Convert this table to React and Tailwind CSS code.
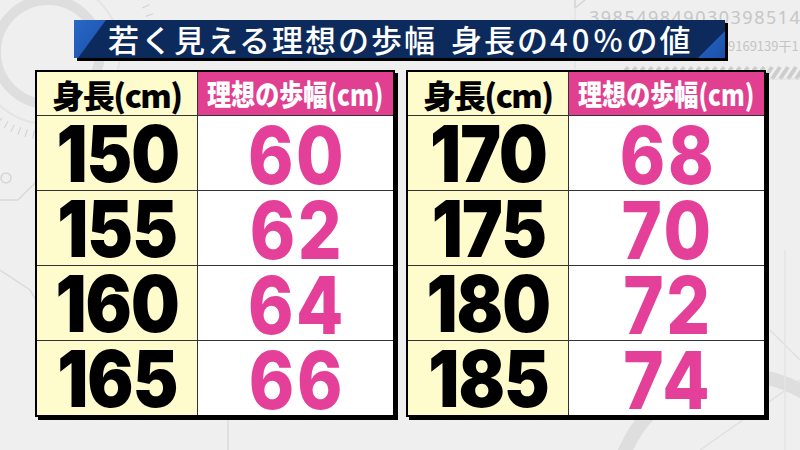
import React from "react";

const left = [
  ["150", "60"],
  ["155", "62"],
  ["160", "64"],
  ["165", "66"],
];
const right = [
  ["170", "68"],
  ["175", "70"],
  ["180", "72"],
  ["185", "74"],
];

const jp = { fontFamily: '"Noto Sans CJK JP", "Noto Sans", sans-serif' };
const num = { fontFamily: 'Inter, "Liberation Sans", sans-serif' };

function Background() {
  return (
    <svg
      className="absolute inset-0 pointer-events-none"
      width="800"
      height="450"
      viewBox="0 0 800 450"
    >
      <circle cx="48" cy="52" r="52" fill="none" stroke="#dedede" strokeWidth="10" />
      <circle cx="48" cy="52" r="72" fill="none" stroke="#e4e4e4" strokeWidth="2" />
      {Array.from({ length: 14 }).map((_, i) => {
        const a = (-70 + i * 5) * (Math.PI / 180);
        const r1 = 104, r2 = 112;
        return (
          <line
            key={"t" + i}
            x1={48 + r1 * Math.cos(a)}
            y1={52 + r1 * Math.sin(a)}
            x2={48 + r2 * Math.cos(a)}
            y2={52 + r2 * Math.sin(a)}
            stroke="#cfcfcf"
            strokeWidth="1"
          />
        );
      })}
      {Array.from({ length: 10 }).map((_, i) => {
        const a = (95 + i * 5) * (Math.PI / 180);
        const r1 = 80, r2 = 88;
        return (
          <line
            key={"b" + i}
            x1={48 + r1 * Math.cos(a)}
            y1={52 + r1 * Math.sin(a)}
            x2={48 + r2 * Math.cos(a)}
            y2={52 + r2 * Math.sin(a)}
            stroke="#cfcfcf"
            strokeWidth="1"
          />
        );
      })}
      <path d="M0 200 L18 200 L40 178" fill="none" stroke="#dadada" strokeWidth="1.5" />
      <circle cx="6" cy="178" r="5" fill="none" stroke="#d6d6d6" strokeWidth="1.5" />
      <path d="M0 270 L30 290 L36 300" fill="none" stroke="#dadada" strokeWidth="1.5" />
      <path d="M228 380 L228 450" fill="none" stroke="#dcdcdc" strokeWidth="1.5" />
      <path d="M575 0 L575 8 L585 0" fill="none" stroke="#d4d4d4" strokeWidth="1.5" />
      <path d="M575 8 L575 300" fill="none" stroke="#e4e4e4" strokeWidth="1.5" />
      <g stroke="#cdcdcd" strokeWidth="4">
        {Array.from({ length: 24 }).map((_, i) => (
          <line key={"h" + i} x1={620 + i * 8} y1="79" x2={628 + i * 8} y2="67" />
        ))}
      </g>
      <line x1="615" y1="79" x2="800" y2="79" stroke="#e0e0e0" strokeWidth="1" />
      <circle cx="740" cy="500" r="125" fill="none" stroke="#dedede" strokeWidth="14" />
      <path d="M700 450 L800 380" stroke="#e0e0e0" strokeWidth="1.5" />
      <path d="M770 330 L800 360" stroke="#e0e0e0" strokeWidth="1.5" />
      <path d="M785 250 L785 450" stroke="#e4e4e4" strokeWidth="1.5" />
    </svg>
  );
}

function Table({ rows }) {
  return (
    <div className="border-2 border-black shadow-[3px_3px_0_#000] grid grid-cols-[161px_195px] grid-rows-[44px_75px_75px_75px_74px] bg-white">
      <div className="bg-[#fefbcd] border-r border-b border-[#333] flex items-center justify-center">
        <span className="text-[32px] font-black text-black leading-none tracking-[-1.5px]" style={jp}>
          身長(cm)
        </span>
      </div>
      <div className="bg-[#e13f8f] border-b border-[#333] flex items-center justify-center overflow-hidden">
        <span
          className="inline-block text-[29px] font-black text-white leading-none scale-x-[0.83] whitespace-nowrap"
          style={jp}
        >
          理想の歩幅(cm)
        </span>
      </div>
      {rows.map(([a, b], i) => {
        const last = i === rows.length - 1;
        return (
          <React.Fragment key={a}>
            <div
              className={
                "bg-[#fefbcd] border-r border-[#333] flex items-center justify-center " +
                (last ? "" : "border-b")
              }
            >
              <span
                className="inline-block text-[78px] font-black text-black leading-[0.85] tracking-[-1px] mr-[-1px] pt-[3px] scale-x-[0.88]"
                style={num}
              >
                {a}
              </span>
            </div>
            <div
              className={
                "bg-white border-[#333] flex items-center justify-center " +
                (last ? "" : "border-b")
              }
            >
              <span
                className="inline-block text-[80px] font-extrabold text-[#e4409a] leading-[0.85] tracking-[3px] mr-[-3px] pt-[3px] scale-x-[0.86]"
                style={num}
              >
                {b}
              </span>
            </div>
          </React.Fragment>
        );
      })}
    </div>
  );
}

export default function App() {
  return (
    <div className="relative w-[800px] h-[450px] overflow-hidden bg-[#efefef]">
      <Background />
      <div
        className="absolute top-[10px] left-[589px] text-[18px] text-[#c6c6c6] tracking-[1.5px] whitespace-nowrap leading-[14px]"
        style={{ fontFamily: '"Noto Sans", sans-serif' }}
      >
        398549849030398514
      </div>
      <div
        className="absolute top-[40px] left-[728px] text-[13px] text-[#c4c4c4] whitespace-nowrap leading-[12px]"
        style={{ fontFamily: '"Noto Sans CJK JP", sans-serif' }}
      >
        9169139干1
      </div>
      <div className="relative flex flex-col pt-[20px]">
        <div className="ml-[74px] w-[651px] h-[38px] relative bg-[#0c2a5c] shadow-[3px_3px_0_#000] flex items-center">
          <svg className="absolute inset-0" width="651" height="38" viewBox="0 0 651 38">
            <defs>
              <linearGradient id="bl" x1="0" y1="0" x2="1" y2="1">
                <stop offset="0" stopColor="#2868c8" />
                <stop offset="1" stopColor="#1a4fa8" />
              </linearGradient>
            </defs>
            <polygon points="0,0 32,0 4,38 0,38" fill="url(#bl)" />
            <polygon points="651,11 651,38 624,38" fill="url(#bl)" />
          </svg>
          <div
            className="relative ml-[34px] text-white text-[31px] leading-none font-medium whitespace-nowrap tracking-[2px] pb-[2px]"
            style={jp}
          >
            <span>若く見える理想の歩幅</span>
            <span className="ml-[14px]">身長の</span>
            <span className="tracking-[4px]">40%</span>
            <span>の値</span>
          </div>
        </div>
        <div className="mt-[12px] ml-[35px] flex gap-[11px]">
          <Table rows={left} />
          <Table rows={right} />
        </div>
      </div>
    </div>
  );
}
